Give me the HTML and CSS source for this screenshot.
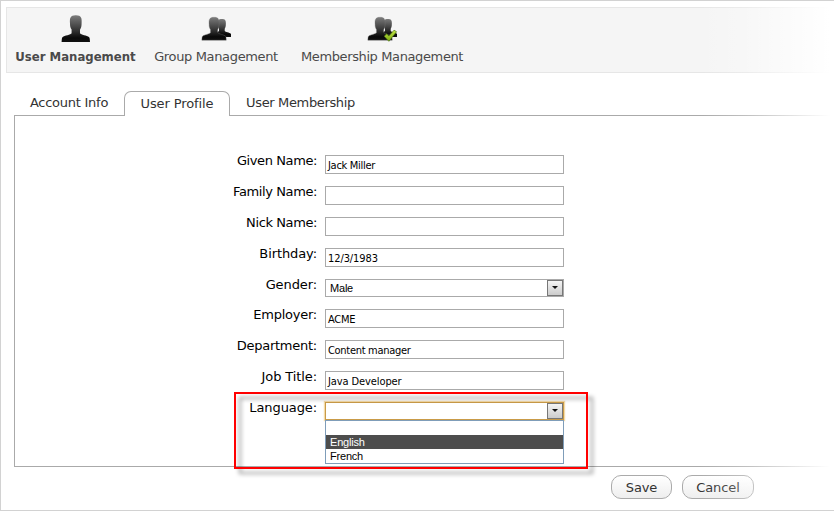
FILE: index.html
```html
<!DOCTYPE html>
<html lang="en">
<head>
<meta charset="utf-8">
<title>User Management</title>
<link rel="stylesheet" href="styles.css">
</head>
<body>
<svg class="defs" width="0" height="0">
  <defs>
    <linearGradient id="dark" x1="0" y1="0" x2="0" y2="1"><stop offset="0" stop-color="#7c7c7c"/><stop offset=".5" stop-color="#3c3c3c"/><stop offset=".85" stop-color="#0a0a0a"/><stop offset="1" stop-color="#111"/></linearGradient>
    <linearGradient id="green" x1="0" y1="0" x2="0" y2="1"><stop offset="0" stop-color="#c5e647"/><stop offset="1" stop-color="#78a812"/></linearGradient>
    <path id="person" d="M10.3 14.5C9 13 8.7 10.8 8.7 8.5C8.4 3.4 8.7 .3 14.5 .3S20.6 3.4 20.3 8.5C20.3 11 19.9 13 18.7 14.7V18.2C19.4 19.6 26 20.6 27.6 22C28.7 22.9 28.5 24.8 28.7 27H.3C.5 24.8.3 22.9 1.4 22C3 20.6 9.6 19.6 10.3 18.2Z"/>
  </defs>
</svg>
<div class="window">
  <nav class="toolbar">
    <div class="tool tool-user"><svg class="icon" width="30" height="30" viewBox="0 0 30 30"><use href="#person" x=".3" y="2" fill="url(#dark)"/></svg><b class="t-user">User Management</b></div>
    <div class="tool tool-group"><svg class="icon" width="30" height="30" viewBox="0 0 30 30"><use href="#person" transform="translate(11 5.7) scale(.68)" fill="url(#dark)"/><use href="#person" transform="translate(.6 4) scale(.86)" fill="url(#dark)" stroke="#777" stroke-width=".4"/></svg><span class="t-group">Group Management</span></div>
    <div class="tool tool-member"><svg class="icon" width="30" height="30" viewBox="0 0 30 30"><use href="#person" transform="translate(11 5.7) scale(.68)" fill="url(#dark)"/><use href="#person" transform="translate(.6 4) scale(.86)" fill="url(#dark)" stroke="#777" stroke-width=".4"/><path d="M17.2 23.2L19.8 20.8L21.8 23.1L27 17.2L29.6 18.7L21.9 28.3Z" fill="url(#green)" stroke="#4e7510" stroke-width=".7" stroke-linejoin="round"/></svg><span class="t-member">Membership Management</span></div>
  </nav>
  <div class="tabs">
    <div class="tab tab-account"><span>Account Info</span></div>
    <div class="tab active"><span>User Profile</span></div>
    <div class="tab tab-member"><span>User Membership</span></div>
  </div>
  <main class="panel">
    <div class="row"><label class="tight">Given Name:</label><div class="input"><span class="v-given">Jack Miller</span></div></div>
    <div class="row"><label class="tight">Family Name:</label><div class="input"></div></div>
    <div class="row"><label class="tight">Nick Name:</label><div class="input"></div></div>
    <div class="row"><label>Birthday:</label><div class="input"><span class="v-date">12/3/1983</span></div></div>
    <div class="row short"><label>Gender:</label><div class="select">Male<i class="arrow"></i></div></div>
    <div class="row"><label class="snug">Employer:</label><div class="input"><span>ACME</span></div></div>
    <div class="row"><label class="snug">Department:</label><div class="input"><span>Content manager</span></div></div>
    <div class="row"><label>Job Title:</label><div class="input"><span class="v-job">Java Developer</span></div></div>
    <div class="row"><label>Language:</label><div class="select focused"><i class="arrow"></i>
      <div class="menu"><div></div><div class="selected">English</div><div>French</div></div></div></div>
  </main>
  <footer class="actions"><div class="button save">Save</div><div class="button cancel">Cancel</div></footer>
  <div class="callout"></div>
  <div class="fade"></div>
</div>
</body>
</html>
```
FILE: styles.css
```css
* { box-sizing: border-box; }
body { margin: 0; background: #fff; font: 13px/16px "DejaVu Sans", Verdana, sans-serif; letter-spacing: -.1px; color: #333; }
.defs { position: absolute; }
.window { position: relative; width: 834px; height: 511px; overflow: hidden; border: 1px solid #d2d2d2; border-right: 0; padding: 6px 0 0 5px; white-space: nowrap; }
.toolbar { display: flex; height: 66px; padding: 5px 0 0 9px; background: #f5f5f5; border: 1px solid #e6e6e6; border-right: 0; color: #4a4a4a; }
.tool { display: flex; flex-direction: column; align-items: center; gap: 6px; }
.tool-user { width: 119px; }
.tool-group { width: 124px; margin-left: 19px; }
.tool-member { width: 162px; margin-left: 23px; }
.t-user { font-family: "DejaVu Sans Condensed", Verdana, sans-serif; letter-spacing: 0; }
.t-group { letter-spacing: -.35px; }
.t-member { letter-spacing: -.38px; }
.icon { display: block; flex: none; }
.tabs { display: flex; height: 43px; padding: 18px 0 0 8px; position: relative; z-index: 1; }
.tab { height: 25px; padding-top: 4px; text-align: center; }
.tab-account { width: 110px; letter-spacing: -.25px; }
.active { width: 106px; border: 1px solid #aaa; border-bottom: 0; border-radius: 7px 7px 0 0; background: #fff; }
.tab-member { width: 141px; letter-spacing: -.35px; }
.panel { height: 352px; margin: -1px 0 0 8px; padding-top: 39px; border: 1px solid #aaa; border-right: 0; }
.row { display: flex; gap: 8px; height: 31px; color: #000; }
.short { height: 30px; }
.row label { width: 302px; text-align: right; margin-top: -2px; }
.row .tight { letter-spacing: -.4px; }
.row .snug { letter-spacing: -.25px; }
.input { width: 239px; height: 19px; border: 1px solid #aaa; padding: 2px 0 0 2px; font: 11px/15px "DejaVu Sans Condensed", Tahoma, sans-serif; letter-spacing: -.3px; }
.v-date { letter-spacing: -.1px; }
.v-job { letter-spacing: -.1px; }
.select { position: relative; width: 239px; height: 18px; border: 1px solid #aaa; padding: 1px 0 0 4px; font: 11px/15px "Liberation Sans", Arial, sans-serif; letter-spacing: -.2px; }
.arrow { position: absolute; right: 0; top: 0; width: 16px; height: 16px; border: 1px solid #777; background: linear-gradient(#f4f4f4, #ccc); }
.arrow::after { content: ""; position: absolute; left: 4px; top: 5px; border: 3px solid transparent; border-top-color: #111; border-bottom: 0; }
.focused { border-color: #c99b48; box-shadow: 0 0 1px 1px rgba(236, 184, 80, .5); }
.menu { position: absolute; left: -1px; top: 17px; width: 239px; height: 44px; border: 1px solid #7f9db9; background: #fff; line-height: 14px; }
.menu div { height: 14px; padding-left: 4px; }
.menu .selected { background: #4d4d4d; color: #fff; }
.actions { display: flex; gap: 10px; padding: 8px 0 0 605px; }
.button { height: 24px; border: 1px solid #aaa; border-radius: 10px; background: linear-gradient(#fff, #eee); text-align: center; line-height: 23px; }
.save { width: 61px; }
.cancel { width: 72px; }
.callout { position: absolute; left: 233px; top: 391px; width: 354px; height: 77px; border: 2px solid #f00; filter: drop-shadow(5px 5px 2px rgba(0,0,0,.4)); z-index: 3; }
.fade { position: absolute; right: 0; top: -1px; width: 134px; height: 511px; background: linear-gradient(90deg, rgba(255,255,255,0), rgba(255,255,255,.25) 35%, #fff 97%); z-index: 4; }
```
